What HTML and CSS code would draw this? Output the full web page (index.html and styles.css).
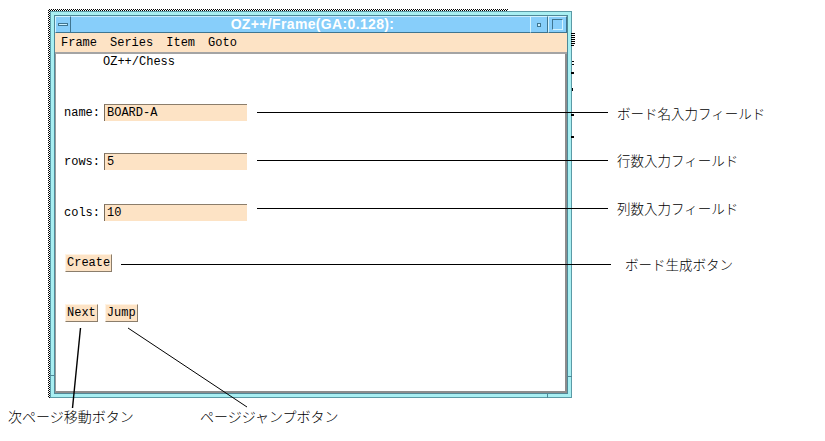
FILE: index.html
```html
<!DOCTYPE html>
<html lang="ja">
<head>
<meta charset="utf-8">
<title>OZ++/Chess</title>
<link rel="stylesheet" href="styles.css">
</head>
<body>
<div class="canvas">
  <div class="outline-top"></div>
  <div class="outline-left"></div>

  <div class="window">
    <div class="inner">
      <div class="titlebar">
        <div class="tb-btn tb-min"><span class="min-bar"></span></div>
        <div class="tb-title">OZ++/Frame(GA:0.128):</div>
        <div class="tb-btn tb-icon"><span class="dot"></span></div>
        <div class="tb-btn tb-max"><span class="sq"></span></div>
      </div>
      <div class="menubar">
        <span>Frame</span><span>Series</span><span>Item</span><span>Goto</span>
      </div>
      <div class="content">
        <div class="app-title">OZ++/Chess</div>
        <div class="field-row row-name"><span class="lbl">name:</span><div class="field">BOARD-A</div></div>
        <div class="field-row row-rows"><span class="lbl">rows:</span><div class="field">5</div></div>
        <div class="field-row row-cols"><span class="lbl">cols:</span><div class="field">10</div></div>
        <div class="btn-row row-create"><span class="btn">Create</span></div>
        <div class="btn-row row-nav"><span class="btn">Next</span><span class="btn">Jump</span></div>
      </div>
    </div>
  </div>

  <svg class="overlay" width="825" height="441" viewBox="0 0 825 441">
    <g fill="#000" shape-rendering="crispEdges">
      <rect x="571" y="33" width="4" height="1"/>
      <rect x="571" y="35" width="4" height="1"/>
      <rect x="571" y="37" width="4" height="1"/>
      <rect x="571" y="39" width="4" height="1"/>
      <rect x="571" y="41" width="4" height="1"/>
      <rect x="571" y="43" width="4" height="1"/>
      <rect x="571" y="45" width="3" height="1"/>
      <rect x="572" y="61" width="2" height="1"/>
      <rect x="572" y="64" width="2" height="1"/>
      <rect x="571" y="72" width="3" height="2"/>
      <rect x="572" y="88" width="1" height="3"/>
      <rect x="571" y="114" width="3" height="2"/>
      <rect x="571" y="136" width="3" height="2"/>
    </g>
    <g stroke="#4f8897" stroke-width="1" shape-rendering="crispEdges">
      <line x1="50" y1="375.5" x2="55" y2="375.5"/>
      <line x1="567" y1="376.5" x2="572" y2="376.5"/>
      <line x1="547.5" y1="393" x2="547.5" y2="398"/>
    </g>
    <g stroke="#000" stroke-width="1" shape-rendering="crispEdges">
      <line x1="257" y1="112.5" x2="608" y2="112.5"/>
      <line x1="257" y1="160.5" x2="608" y2="160.5"/>
      <line x1="257" y1="208.5" x2="608" y2="208.5"/>
      <line x1="121" y1="264.5" x2="611" y2="264.5"/>
    </g>
    <g stroke="#000" fill="none">
      <line x1="80.5" y1="328" x2="72.5" y2="408" stroke-width="1.4"/>
      <line x1="128" y1="328" x2="247" y2="407" stroke-width="1"/>
    </g>
  </svg>

  <span class="callout c-name">ボード名入力フィールド</span>
  <span class="callout c-rows">行数入力フィールド</span>
  <span class="callout c-cols">列数入力フィールド</span>
  <span class="callout c-create">ボード生成ボタン</span>
  <span class="callout c-next">次ページ移動ボタン</span>
  <span class="callout c-jump">ページジャンプボタン</span>
</div>
</body>
</html>
```

FILE: styles.css
```css
html, body {
  margin: 0;
  padding: 0;
  background: #fff;
}

.canvas {
  position: relative;
  width: 825px;
  height: 441px;
  overflow: hidden;
  font-family: "Liberation Mono", "DejaVu Sans Mono", monospace;
  font-size: 12px;
  color: #000;
}

/* outline of a window lying beneath */
.outline-top,
.outline-left {
  position: absolute;
  background: repeating-conic-gradient(#000 0 25%, transparent 0 50%) 0 0 / 2px 2px;
}
.outline-top {
  left: 48px;
  top: 9px;
  width: 460px;
  height: 2px;
}
.outline-left {
  left: 48px;
  top: 9px;
  width: 2px;
  height: 389px;
}

/* the application window */
.window {
  position: absolute;
  left: 50px;
  top: 11px;
  width: 522px;
  height: 387px;
  box-sizing: border-box;
  background: #a8eff2;
  border: 1px solid #5b9aa6;
  padding: 3px;
  display: flex;
}

.inner {
  flex: 1;
  min-width: 0;
  display: flex;
  flex-direction: column;
  border: 1px solid #4f8897;
  background: #fff;
}

.titlebar {
  height: 17px;
  display: flex;
  background: #87cefa;
  flex: none;
}

.tb-btn {
  box-sizing: border-box;
  height: 17px;
  border: 1px solid;
  border-color: #d2f3ff #3f7590 #3f7590 #d2f3ff;
  display: flex;
  align-items: center;
  justify-content: center;
  flex: none;
}
.tb-min { width: 16px; }
.tb-icon { width: 18px; }
.tb-max { width: 19px; }

.min-bar {
  width: 10px;
  height: 3px;
  box-sizing: border-box;
  background: #c8f0ff;
  border: 1px solid #3f7590;
}
.dot {
  width: 4px;
  height: 4px;
  box-sizing: border-box;
  background: #c8f0ff;
  border: 1px solid #3f7590;
}
.sq {
  width: 11px;
  height: 11px;
  box-sizing: border-box;
  border: 1px solid;
  border-color: #3f7590 #d2f3ff #d2f3ff #3f7590;
}

.tb-title {
  flex: 1;
  text-align: center;
  color: #fff;
  font-family: "Liberation Sans", Arial, sans-serif;
  font-weight: bold;
  font-size: 14px;
  letter-spacing: 0.35px;
  line-height: 15px;
  padding-left: 24px;
  white-space: nowrap;
  overflow: hidden;
  border-top: 1px solid #c8ecff;
  border-bottom: 1px solid #3f7590;
  box-sizing: border-box;
}

.menubar {
  flex: none;
  height: 21px;
  box-sizing: border-box;
  background: #fde3c5;
  border-bottom: 2px solid #a4a4a4;
  display: flex;
  align-items: center;
  gap: 13px;
  padding-left: 6px;
  line-height: 14px;
}

.content {
  flex: 1;
  display: flex;
  flex-direction: column;
  align-items: flex-start;
  border-left: 1px solid #9a9a9a;
  border-right: 2px solid #8c8c8c;
  border-bottom: 2px solid #8c8c8c;
  padding: 1px 0 0 8px;
}

.app-title {
  margin-left: 39px;
  line-height: 14px;
}

.field-row {
  display: flex;
  align-items: center;
  height: 17px;
}
.row-name { margin-top: 35px; }
.row-rows { margin-top: 32px; }
.row-cols { margin-top: 34px; }

.lbl {
  width: 40px;
}

.field {
  box-sizing: border-box;
  width: 143px;
  height: 17px;
  background: #fde3c5;
  border-top: 1px solid #8b7d6b;
  border-left: 1px solid #7a6c5a;
  padding-left: 2px;
  line-height: 16px;
}

.btn-row {
  display: flex;
  gap: 7px;
  margin-left: 1px;
}
.row-create { margin-top: 33px; }
.row-nav { margin-top: 32px; }

.btn {
  box-sizing: border-box;
  height: 18px;
  padding: 0 1px;
  background: #fde3c5;
  border-top: 1px solid #fff3e4;
  border-left: 1px solid #fff3e4;
  border-right: 1px solid #8b7d6b;
  border-bottom: 1px solid #8b7d6b;
  line-height: 16px;
}

/* leader lines */
.overlay {
  position: absolute;
  left: 0;
  top: 0;
  pointer-events: none;
}

/* callout labels */
.callout {
  position: absolute;
  font-family: "Noto Sans CJK JP", "Noto Sans CJK SC", sans-serif;
  font-size: 13.5px;
  line-height: 14px;
  white-space: nowrap;
  font-weight: 300;
}
.c-name { left: 617px; top: 106px; }
.c-rows { left: 617px; top: 153px; }
.c-cols { left: 617px; top: 201px; }
.c-create { left: 625px; top: 257px; }
.c-next { left: 8px; top: 409px; font-size: 14px; }
.c-jump { left: 200px; top: 409px; font-size: 14px; }
```
